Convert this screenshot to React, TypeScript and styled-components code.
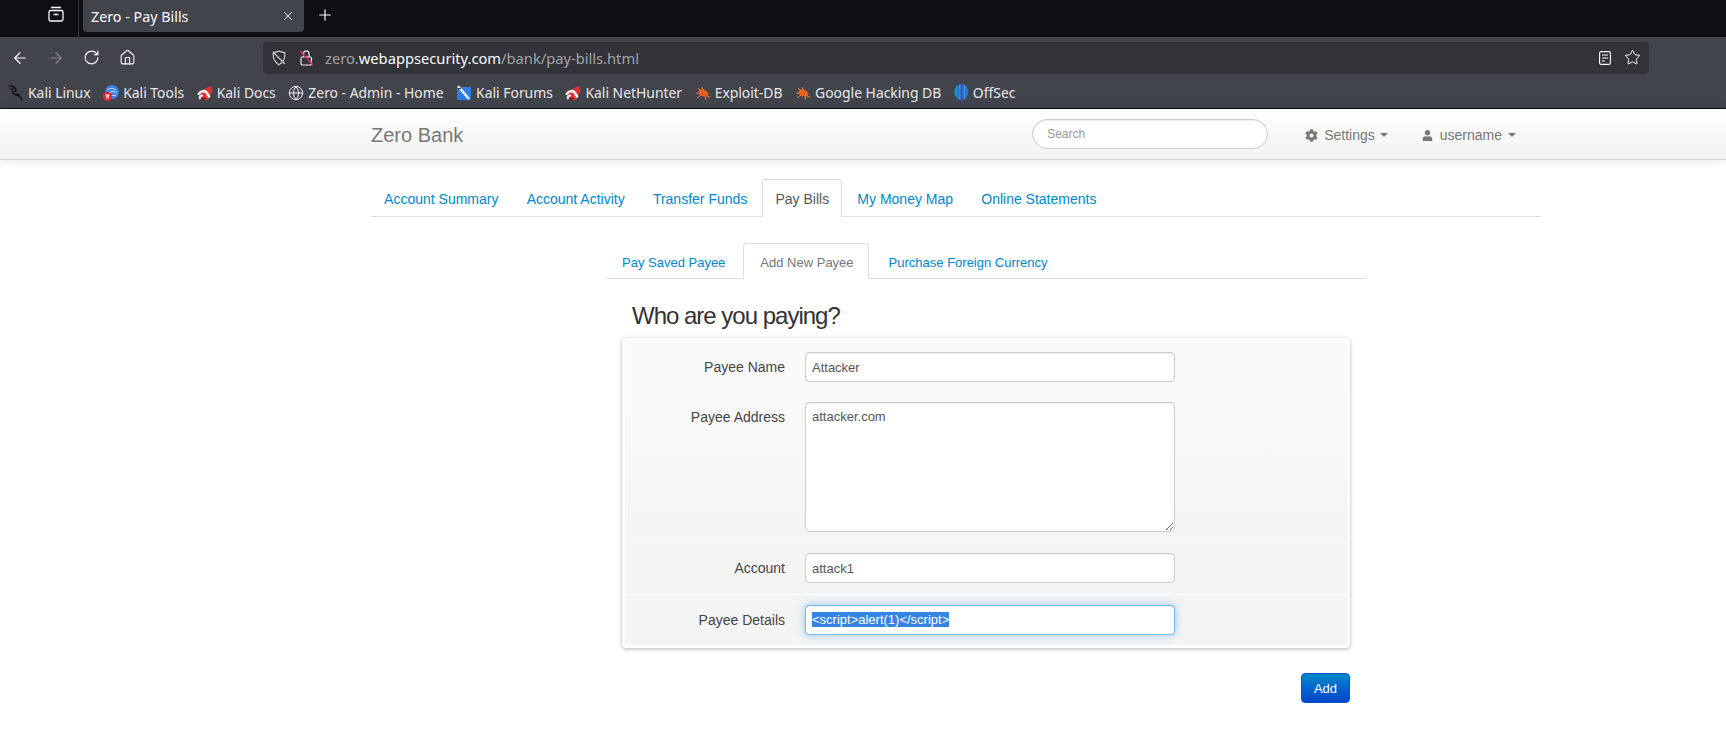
import styled, { createGlobalStyle } from 'styled-components';
import { ArrowLeft, ArrowRight, Globe, House, Plus, RotateCw, Star, X } from 'lucide-react';
import { FaCog, FaUser } from 'react-icons/fa';

const GlobalStyle = createGlobalStyle`
  html, body {
    margin: 0;
    padding: 0;
    background: #fff;
    overflow: hidden;
  }
  * {
    box-sizing: border-box;
  }
`;

const uiFont = `"Noto Sans", "Open Sans", sans-serif`;
const pageFont = `"Liberation Sans", Arial, sans-serif`;

const Page = styled.div`
  width: 1726px;
  height: 733px;
  overflow: hidden;
`;

const TabStrip = styled.div`
  height: 37px;
  background: #0e0f13;
  display: flex;
  align-items: flex-start;
  color: #fbfbfe;
  font-family: ${uiFont};
  font-size: 14.3px;
`;

const ViewButton = styled.div`
  width: 79px;
  height: 37px;
  padding: 6px 0 0 48px;
  border-right: 1px solid #33353a;
`;

const BrowserTab = styled.div`
  width: 221px;
  height: 32px;
  margin-left: 4px;
  padding: 0 9px 0 8px;
  background: #42444c;
  border-radius: 0 0 4px 4px;
  display: flex;
  align-items: center;
  justify-content: space-between;
`;

const NewTab = styled.div`
  margin-left: 12px;
  margin-top: 6px;
  line-height: 0;
`;

const Chrome = styled.div`
  background: #42444c;
  height: 72px;
  border-bottom: 1px solid #0c0c0d;
`;

const NavRow = styled.div`
  height: 37px;
  display: flex;
  align-items: center;
  padding: 4px 77px 0 11px;
  color: #fbfbfe;
`;

const NavButton = styled.div<{ $dim?: boolean }>`
  width: 36px;
  line-height: 0;
  color: ${(p) => (p.$dim ? '#85868c' : '#fbfbfe')};
`;

const UrlBar = styled.div`
  flex: 1;
  height: 32px;
  margin-left: 108px;
  border-radius: 4px;
  background: #323338;
  display: flex;
  align-items: center;
  padding: 0 8px;
  gap: 9px;
  font-family: ${uiFont};
  font-size: 14.7px;
  color: #a2a3a7;
`;

const IconSlot = styled.div<{ $gap: number }>`
  margin-right: ${(p) => p.$gap}px;
  line-height: 0;
`;

const UrlText = styled.div`
  flex: 1;
  margin-left: 1px;
  white-space: nowrap;
  strong {
    color: #fbfbfe;
    font-weight: 400;
  }
`;

const BookmarkRow = styled.div`
  height: 34px;
  display: flex;
  align-items: center;
  padding: 3px 0 0 8px;
  gap: 12.6px;
  color: #e8e8ea;
  font-family: ${uiFont};
  font-size: 13.9px;
`;

const Bookmark = styled.div`
  display: flex;
  align-items: center;
  gap: 4px;
  white-space: nowrap;
  svg {
    flex: none;
  }
`;

const Navbar = styled.div`
  height: 51px;
  background: linear-gradient(#ffffff, #f2f2f2);
  border-bottom: 1px solid #d4d4d4;
  box-shadow: 0 1px 10px rgba(0, 0, 0, 0.1);
  font-family: ${pageFont};
`;

const Container = styled.div`
  width: 1170px;
  margin-left: 371px;
`;

const NavbarInner = styled(Container)`
  height: 100%;
  display: flex;
  align-items: center;
`;

const Brand = styled.div`
  font-size: 20px;
  color: #777;
  flex: 1;
  padding-top: 2px;
`;

const SearchBox = styled.div`
  width: 236px;
  height: 30px;
  border: 1px solid #ccc;
  border-radius: 15px;
  background: #fff;
  box-shadow: inset 0 1px 1px rgba(0, 0, 0, 0.075);
  color: #999;
  font-size: 12px;
  line-height: 29px;
  padding-left: 14px;
  margin-right: 37px;
`;

const NavMenu = styled.div<{ $last?: boolean }>`
  display: flex;
  align-items: center;
  gap: ${(p) => (p.$last ? '6px' : '5px')};
  color: #777;
  font-size: 14px;
  padding-top: 2px;
  margin-right: ${(p) => (p.$last ? '25px' : '34px')};
  svg {
    flex: none;
    margin-right: 1px;
  }
`;

const Caret = styled.span`
  width: 0;
  height: 0;
  border-left: 4px solid transparent;
  border-right: 4px solid transparent;
  border-top: 4px solid #777;
`;

const Content = styled(Container)`
  padding-top: 19px;
  font-family: ${pageFont};
`;

const TabList = styled.div<{ $sub?: boolean }>`
  display: flex;
  border-bottom: 1px solid #ddd;
  height: ${(p) => (p.$sub ? '36px' : '38px')};
  border-radius: ${(p) => (p.$sub ? '0 0 4px 4px' : '0')};
  font-size: ${(p) => (p.$sub ? '13px' : '14px')};
`;

const TabLink = styled.div<{ $active?: boolean; $sub?: boolean }>`
  height: ${(p) => (p.$sub ? '36px' : '38px')};
  padding: ${(p) => (p.$sub ? '10.5px 14px 0 16px' : '11px 12.1px 0')};
  margin-right: ${(p) => (p.$sub ? '3px' : '2px')};
  border: 1px solid ${(p) => (p.$active ? '#ddd' : 'transparent')};
  border-bottom-color: ${(p) => (p.$active ? '#fff' : 'transparent')};
  border-radius: 4px 4px 0 0;
  background: ${(p) => (p.$active ? '#fff' : 'transparent')};
  color: ${(p) => (p.$active ? (p.$sub ? '#777' : '#555') : '#0088cc')};
  white-space: nowrap;
`;

const SubPane = styled.div`
  width: 763px;
  margin: 26px 0 0 234px;
`;

const Panel = styled.div`
  position: relative;
  padding: 16px 17px 0;
  &::before {
    content: '';
    position: absolute;
    left: 0;
    right: 0;
    top: 0;
    height: 180px;
    background: #fdfdfd;
    z-index: -1;
  }
`;

const Heading = styled.h2`
  margin: 3px 0 4px 10px;
  height: 36px;
  font-size: 24px;
  letter-spacing: -1px;
  line-height: 36px;
  font-weight: 400;
  color: #333;
`;

const Well = styled.div`
  width: 728px;
  padding: 4px 3px 3px;
  background: #fff;
  border-radius: 4px;
  box-shadow: 0 1px 4px rgba(0, 0, 0, 0.3);
`;

const FormRow = styled.div<{ $height: number; $tone: string; $divided?: boolean }>`
  display: flex;
  align-items: flex-start;
  height: ${(p) => p.$height}px;
  padding-top: 10px;
  background: ${(p) => p.$tone};
  border-top: ${(p) => (p.$divided ? '1px solid #fff' : 'none')};
  &:last-child {
    border-radius: 0 0 3px 3px;
  }
`;

const FieldLabel = styled.label`
  width: 160px;
  text-align: right;
  font-size: 14px;
  line-height: 20px;
  color: #444;
  padding-top: 5px;
  margin-right: 20px;
`;

const fieldCss = `
  width: 370px;
  border: 1px solid #ccc;
  border-radius: 4px;
  background: #fff;
  padding: 4px 6px;
  font-family: ${pageFont};
  font-size: 13px;
  line-height: 20px;
  color: #555;
  box-shadow: inset 0 1px 1px rgba(0, 0, 0, 0.075);
  outline: none;
`;

const TextInput = styled.input`
  ${fieldCss}
  height: 30px;
`;

const TextArea = styled.textarea`
  ${fieldCss}
  height: 130px;
  display: block;
`;

const FocusedField = styled.div`
  ${fieldCss}
  height: 30px;
  border-color: rgba(82, 168, 236, 0.8);
  box-shadow: inset 0 1px 1px rgba(0, 0, 0, 0.075), 0 0 8px rgba(82, 168, 236, 0.6);
  span {
    background: #3584e4;
    color: #fff;
  }
`;

const Actions = styled.div`
  width: 728px;
  display: flex;
  justify-content: flex-end;
  margin-top: 25px;
`;

const AddButton = styled.button`
  width: 49px;
  height: 30px;
  padding: 0;
  border: 1px solid #0055cc;
  border-radius: 4px;
  background: linear-gradient(#0088cc, #0044cc);
  color: #fff;
  font-family: ${pageFont};
  font-size: 13px;
`;

const KaliDragon = () => (
  <svg width="16" height="16" viewBox="0 0 16 16" fill="none" stroke="#0b0b0c" strokeWidth="1.2">
    <path d="M.5 1.5C3 .8 5.5 1.5 7 3c1.6 1.500 1.400 3-.4 3.400C5 6.800 4.200 7.800 5.500 8.800c2 1.400 5.500 1.400 7 3.200.8 1 1.200 2.200 1 3.500" />
    <path d="M2.500 4.500L6 3.500M7.500 9.500c1.500-.8 3-.4 4 .6M3.500 6l2 .5" />
  </svg>
);

const KaliToolsIcon = () => (
  <svg width="16" height="16" viewBox="0 0 16 16">
    <circle cx="9" cy="7" r="7" fill="#3b82e0" />
    <path d="M4 5c3-2 6-2 9 0M6 8c2-2 5-2 8-.5M8 11c2-1 4-1 5-.5" stroke="#cfe3fa" strokeWidth="1" fill="none" />
    <circle cx="4.500" cy="11.500" r="4.500" fill="#e3262e" />
    <path d="M2.500 10h4M3.700 10v3.500M5.300 10v3.500" stroke="#fff" strokeWidth="1" />
  </svg>
);

const KaliDocsIcon = () => (
  <svg width="16" height="16" viewBox="0 0 16 16">
    <path d="M1 7l13-6 1.500 5L11 15H5z" fill="#df2f36" />
    <path d="M1.500 10c1-3.500 6-5.500 8.500-2l2.500 4.500" stroke="#f4f4f4" strokeWidth="2.600" fill="none" />
    <path d="M3.500 14c-1.800-1.500-.5-4 2.500-3.500" stroke="#f4f4f4" strokeWidth="2" fill="none" />
    <path d="M5 13.500c1 .5 2.500.5 3-.5" stroke="#1c1c1e" strokeWidth="1.400" fill="none" />
  </svg>
);

const KaliForumsIcon = () => (
  <svg width="16" height="16" viewBox="0 0 16 16">
    <path d="M1 2h14v12l-1 1H2l-1-1z" fill="#2f7be6" />
    <path d="M2 1l11 13" stroke="#f2f2f2" strokeWidth="2.400" />
    <path d="M2 4l3-1" stroke="#1d1d20" strokeWidth="1.200" />
  </svg>
);

const ExploitIcon = () => (
  <svg width="16" height="16" viewBox="0 0 16 16">
    <ellipse cx="8.500" cy="8" rx="5.200" ry="3.400" fill="#e8601c" transform="rotate(25 8.500 8)" />
    <path d="M1 8l4 .5M3 3l3 3M7 2l1 3M2 13l4-3M10 12l1 3M12 11l3 1" stroke="#ee7a3c" strokeWidth="1" />
  </svg>
);

const OffSecIcon = () => (
  <svg width="15" height="18" viewBox="0 0 15 18">
    <ellipse cx="7.500" cy="8" rx="7" ry="7.800" fill="#2f6fd0" />
    <path d="M7.500 .2C3 .5.5 4 .5 8c0 4 3 7.500 7 7.800z" fill="#1f93c9" />
    <path d="M10.500 1v14" stroke="#2a9ad0" strokeWidth="1.500" />
    <path d="M4 2v12" stroke="#2b62c8" strokeWidth="1" />
    <rect x="6.700" y="0" width="1.600" height="18" fill="#5b3cc0" />
  </svg>
);

const ViewIcon = () => (
  <svg width="16" height="16" viewBox="0 0 16 16" fill="none" stroke="#fbfbfe" strokeWidth="1.300">
    <rect x="1" y="4.500" width="14" height="10.500" rx="1.800" />
    <path d="M3 1.500h10M5.500 8.500h5" />
  </svg>
);

const ShieldIcon = () => (
  <svg width="16" height="16" viewBox="0 0 16 16" fill="none" stroke="#c9cacd" strokeWidth="1.200">
    <path d="M8 1.200l5.800 1.600c.3 5-1 9.500-5.800 12-4.800-2.500-6.100-7-5.800-12z" />
    <path d="M2 2l12 12" />
  </svg>
);

const LockIcon = () => (
  <svg width="16" height="18" viewBox="0 0 16 18" fill="none">
    <rect x="2" y="8" width="10.500" height="8" rx="1.300" stroke="#e8e8ea" strokeWidth="1.200" />
    <path d="M4.500 8V4.500c0-3.500 5.500-3.500 5.500 0V8" stroke="#e8e8ea" strokeWidth="1.200" />
    <path d="M1 2l13 14" stroke="#e22850" strokeWidth="1.500" />
  </svg>
);

const ReaderIcon = () => (
  <svg width="12" height="14" viewBox="0 0 12 14" fill="none" stroke="#fbfbfe" strokeWidth="1.100">
    <rect x=".6" y=".6" width="10.800" height="12.800" rx="1.500" />
    <path d="M3 4h6M3 7h6M3 10h3" />
  </svg>
);

const bookmarks = [
  { icon: <KaliDragon />, label: 'Kali Linux' },
  { icon: <KaliToolsIcon />, label: 'Kali Tools' },
  { icon: <KaliDocsIcon />, label: 'Kali Docs' },
  { icon: <Globe size={16} strokeWidth={1.4} color="#fbfbfe" />, label: 'Zero - Admin - Home' },
  { icon: <KaliForumsIcon />, label: 'Kali Forums' },
  { icon: <KaliDocsIcon />, label: 'Kali NetHunter' },
  { icon: <ExploitIcon />, label: 'Exploit-DB' },
  { icon: <ExploitIcon />, label: 'Google Hacking DB' },
  { icon: <OffSecIcon />, label: 'OffSec' },
];

const mainTabs = ['Account Summary', 'Account Activity', 'Transfer Funds', 'Pay Bills', 'My Money Map', 'Online Statements'];
const subTabs = ['Pay Saved Payee', 'Add New Payee', 'Purchase Foreign Currency'];

const App = () => {
  return (
    <Page>
      <GlobalStyle />
      <TabStrip>
        <ViewButton>
          <ViewIcon />
        </ViewButton>
        <BrowserTab>
          <span>Zero - Pay Bills</span>
          <X size={14} strokeWidth={1.5} />
        </BrowserTab>
        <NewTab>
          <Plus size={18} strokeWidth={1.6} />
        </NewTab>
      </TabStrip>
      <Chrome>
        <NavRow>
          <NavButton>
            <ArrowLeft size={18} strokeWidth={1.6} />
          </NavButton>
          <NavButton $dim>
            <ArrowRight size={18} strokeWidth={1.6} />
          </NavButton>
          <NavButton>
            <RotateCw size={17} strokeWidth={1.6} />
          </NavButton>
          <NavButton>
            <House size={17} strokeWidth={1.5} />
          </NavButton>
          <UrlBar>
            <IconSlot $gap={3}>
              <ShieldIcon />
            </IconSlot>
            <LockIcon />
            <UrlText>
              zero.<strong>webappsecurity.com</strong>/bank/pay-bills.html
            </UrlText>
            <IconSlot $gap={4}>
              <ReaderIcon />
            </IconSlot>
            <Star size={17} strokeWidth={1.4} color="#fbfbfe" />
          </UrlBar>
        </NavRow>
        <BookmarkRow>
          {bookmarks.map((b) => (
            <Bookmark key={b.label}>
              {b.icon}
              {b.label}
            </Bookmark>
          ))}
        </BookmarkRow>
      </Chrome>
      <Navbar>
        <NavbarInner>
          <Brand>Zero Bank</Brand>
          <SearchBox>Search</SearchBox>
          <NavMenu>
            <FaCog size={13} />
            Settings
            <Caret />
          </NavMenu>
          <NavMenu $last>
            <FaUser size={11} />
            username
            <Caret />
          </NavMenu>
        </NavbarInner>
      </Navbar>
      <Content>
        <TabList>
          {mainTabs.map((t) => (
            <TabLink key={t} $active={t === 'Pay Bills'}>
              {t}
            </TabLink>
          ))}
        </TabList>
        <SubPane>
          <TabList $sub>
            {subTabs.map((t) => (
              <TabLink key={t} $sub $active={t === 'Add New Payee'}>
                {t}
              </TabLink>
            ))}
          </TabList>
          <Panel>
            <Heading>Who are you paying?</Heading>
            <Well>
              <FormRow $height={50} $tone="#fafafa">
                <FieldLabel>Payee Name</FieldLabel>
                <TextInput readOnly value="Attacker" />
              </FormRow>
              <FormRow $height={150} $tone="linear-gradient(#fafafa, #f4f4f4)">
                <FieldLabel>Payee Address</FieldLabel>
                <TextArea readOnly value="attacker.com" />
              </FormRow>
              <FormRow $height={52} $tone="#f4f4f4" $divided>
                <FieldLabel>Account</FieldLabel>
                <TextInput readOnly value="attack1" />
              </FormRow>
              <FormRow $height={51} $tone="#f4f4f4" $divided>
                <FieldLabel>Payee Details</FieldLabel>
                <FocusedField>
                  <span>{'<script>alert(1)</script>'}</span>
                </FocusedField>
              </FormRow>
            </Well>
            <Actions>
              <AddButton>Add</AddButton>
            </Actions>
          </Panel>
        </SubPane>
      </Content>
    </Page>
  );
};

export default App;
